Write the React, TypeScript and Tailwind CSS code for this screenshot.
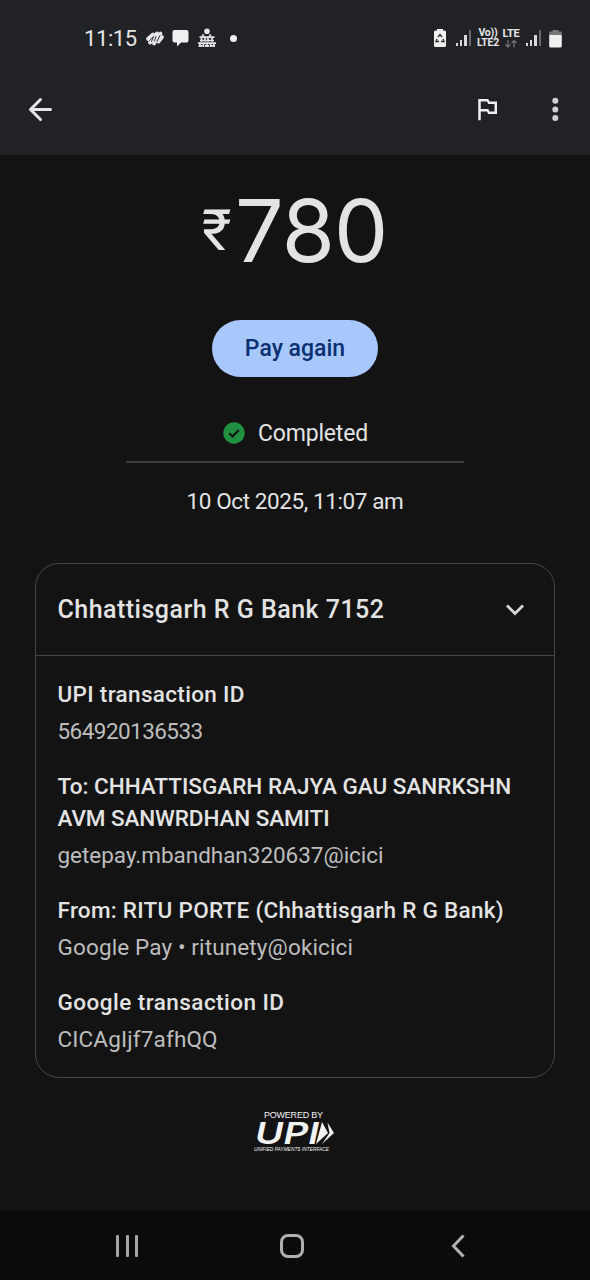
import type { ReactNode } from "react";
import { MdOutlinedFlag } from "react-icons/md";

type Detail = {
  title: ReactNode;
  value: string;
  valueClass: string;
};

const details: Detail[] = [
  {
    title: <span className="tracking-[0.33px]">UPI transaction ID</span>,
    value: "564920136533",
    valueClass: "tracking-[-0.55px]",
  },
  {
    title: (
      <>
        <span className="block">To: CHHATTISGARH RAJYA GAU SANRKSHN</span>
        <span className="block tracking-[-0.1px]">AVM SANWRDHAN SAMITI</span>
      </>
    ),
    value: "getepay.mbandhan320637@icici",
    valueClass: "tracking-[-0.03px]",
  },
  {
    title: <span className="tracking-[0.28px]">From: RITU PORTE (Chhattisgarh R G Bank)</span>,
    value: "Google Pay • ritunety@okicici",
    valueClass: "tracking-[0.13px]",
  },
  {
    title: <span className="tracking-[0.46px]">Google transaction ID</span>,
    value: "CICAgIjf7afhQQ",
    valueClass: "tracking-[0.15px]",
  },
];

function Signal() {
  return (
    <svg width="16" height="18" viewBox="0 0 16 18" fill="#d8d8da">
      <rect x="0" y="14" width="2" height="3" />
      <rect x="4" y="11" width="2" height="6" />
      <rect x="8" y="6" width="3" height="11" />
      <rect x="13" y="1" width="2" height="16" fill="#69696c" />
    </svg>
  );
}

function StatusBar() {
  return (
    <div className="flex h-[76px] items-center pl-[84px] text-[#e6e6e8]">
      <span className="w-[61px] text-[22px] tracking-[-0.4px]">11:15</span>
      <svg width="20" height="18" viewBox="0 0 20 18" fill="none" stroke="#e6e6e8" strokeLinecap="round">
        <path d="M3 10 8 5.500M5 13.500 12 4.500M9 14.500 15.500 4.500M13.500 12.500 17 8" strokeWidth="3.8" />
        <path d="M4.500 11.500 8.500 7.500 6.500 12.500M11 7.500 9.500 12M15 6.500l-3 6" stroke="#212226" strokeWidth="0.9" />
      </svg>
      <svg className="ml-[7px]" width="18" height="18" viewBox="0 0 18 18" fill="#f0f0f0">
        <path d="M2.5 1h12a2 2 0 0 1 2 2v8.500a2 2 0 0 1-2 2H9L5 17.500v-4H2.500a2 2 0 0 1-2-2V3a2 2 0 0 1 2-2z" />
      </svg>
      <svg className="ml-[7px]" width="20" height="20" viewBox="0 0 20 20" fill="none" stroke="#e6e6e8" strokeWidth="1.700">
        <circle cx="10" cy="3.200" r="2.800" fill="#e6e6e8" stroke="none" />
        <path d="M2.500 9.200h15M4.500 9.200v4.500M8 9.200v4.500M11 9.200v4.500M15 9.200v4.500M3 12.500h4M9 12.500h8M5 7.800l2-1M12 7.800l2-1" />
        <path d="M1 15.200h18M3 15v4M6.500 15v4M10 15v4M13.500 15v4M17 15v4M1.500 17.800h4M8 17.800h4M14 17.800h4" />
      </svg>
      <span className="ml-[13px] size-[7px] rounded-full bg-[#f0f0f0]" />

      <svg className="ml-[196px]" width="14" height="20" viewBox="0 0 14 20">
        <path d="M4 1h6v1.500h1.500A1.500 1.500 0 0 1 13 4v13.500A1.500 1.500 0 0 1 11.500 19h-9A1.500 1.500 0 0 1 1 17.500V4a1.500 1.500 0 0 1 1.500-1.500H4z" fill="#f0f0f0" />
        <path d="M5 9 7 6.500 9 9M10 11l1 2.500H8M6 13.500H3L4 11" fill="none" stroke="#2a2b2e" strokeWidth="1.400" />
      </svg>
      <div className="ml-[9px] flex"><Signal /></div>
      <div className="ml-1 w-[24px] text-center text-[10.5px] leading-[10px] font-bold tracking-[-0.2px] whitespace-nowrap">
        <div>Vo))</div>
        <div>LTE2</div>
      </div>
      <div className="ml-[2px] flex w-[18px] flex-col items-center text-[11px] leading-[10px] font-bold tracking-[-0.2px]">
        LTE
        <svg width="12" height="9" viewBox="0 0 12 9" fill="none" stroke="#77777a" strokeWidth="1.200">
          <path d="M3 1v7M0.500 5.500 3 8l2.500-2.500M9 8.500v-7M6.500 4 9 1.500 11.500 4" />
        </svg>
      </div>
      <div className="ml-[6px] flex"><Signal /></div>
      <svg className="ml-[7px]" width="13" height="19" viewBox="0 0 13 19">
        <path d="M3.500 1h6v1.500H12a1 1 0 0 1 .8 1V6H.2V3.500a1 1 0 0 1 .8-1h2.500z" fill="#77777a" />
        <path d="M.2 6h12.600v11a1.500 1.500 0 0 1-1.500 1.500H1.700A1.500 1.500 0 0 1 .2 17z" fill="#f0f0f0" />
      </svg>
    </div>
  );
}

function Toolbar() {
  return (
    <div className="flex h-[79px] items-start pt-[18px] pl-[28px]">
      <svg width="26" height="31" viewBox="0 0 26 31" fill="none" stroke="#e6e6e8" strokeWidth="3" strokeLinecap="round" strokeLinejoin="round">
        <path d="M22.500 15.500H2.500M12.500 5.500l-10 10 10 10" />
      </svg>
      <MdOutlinedFlag className="ml-[418px] size-[30px] text-[#f0f0f0]" />
      <svg className="ml-[47px]" width="12" height="31" viewBox="0 0 12 31" fill="#cfcfd1">
        <circle cx="6.300" cy="6.800" r="3" />
        <circle cx="6.300" cy="15.400" r="3" />
        <circle cx="6.300" cy="24" r="3" />
      </svg>
    </div>
  );
}

function BankCard() {
  return (
    <section className="mx-auto mt-[46px] h-[515px] w-[520px] rounded-[24px] border border-[#444546]">
      <div className="flex h-[92px] items-center justify-between border-b border-[#444546] pr-[29px] pl-[21.5px]">
        <h2 className="text-[25px] font-medium tracking-[0.48px]">Chhattisgarh R G Bank 7152</h2>
        <svg width="20" height="14" viewBox="0 0 20 14" fill="none" stroke="#d5d5d5" strokeWidth="2.800">
          <path d="M2 2.500 10 10.500 18 2.500" />
        </svg>
      </div>
      <div className="flex flex-col gap-[22.5px] px-[21.5px] pt-[21.5px]">
        {details.map((d) => (
          <div key={d.value} className="text-[22.5px] leading-8 whitespace-nowrap">
            <div className="font-medium">{d.title}</div>
            <div className="mt-[5.5px] text-[#bdbdbd]">
              <span className={d.valueClass}>{d.value}</span>
            </div>
          </div>
        ))}
      </div>
    </section>
  );
}

function UpiLogo() {
  return (
    <svg className="mt-[29px]" width="86" height="48" viewBox="0 0 86 48" fill="#f2f2f2">
      <text x="12" y="11" fontSize="9" textLength="59" fontFamily="Liberation Sans, sans-serif">POWERED BY</text>
      <text x="3" y="37" fontSize="29.500" textLength="64" lengthAdjust="spacingAndGlyphs" fontWeight="600" fontStyle="italic" fontFamily="Inter, sans-serif">UPI</text>
      <path d="M70 15 76 26 64 37z" />
      <path d="M75.500 15.500 82 26 70 37 77.500 26z" />
      <text x="2" y="44" fontSize="5" textLength="75" lengthAdjust="spacingAndGlyphs" fontStyle="italic" fontFamily="Liberation Sans, sans-serif">UNIFIED PAYMENTS INTERFACE</text>
    </svg>
  );
}

function NavBar() {
  return (
    <nav className="flex h-[69px] items-center bg-[#0b0b0b] pl-[116px]">
      <div className="flex w-[22px] justify-between">
        <span className="h-[22px] w-[3px] rounded-[1px] bg-[#a5a5a5]" />
        <span className="h-[22px] w-[3px] rounded-[1px] bg-[#a5a5a5]" />
        <span className="h-[22px] w-[3px] rounded-[1px] bg-[#a5a5a5]" />
      </div>
      <span className="ml-[142px] size-6 rounded-[8px] border-3 border-[#b0b0b0]" />
      <svg className="ml-[146px]" width="16" height="24" viewBox="0 0 16 24" fill="none" stroke="#b0b0b0" strokeWidth="3">
        <path d="M13.500 1.500 3.500 12l10 10.500" />
      </svg>
    </nav>
  );
}

export default function App() {
  return (
    <div className="flex h-[1280px] w-[590px] flex-col overflow-hidden bg-[#131313] font-[Roboto,sans-serif] text-[#e3e3e3]">
      <header className="h-[155px] bg-[#212226]">
        <StatusBar />
        <Toolbar />
      </header>
      <main className="flex h-[1056px] flex-col items-center">
        <div className="mt-[26px] flex h-[100px] w-full pl-[202px] font-[Inter,sans-serif] leading-[100px]">
          <span className="w-[33px] text-[57px] font-[Roboto,sans-serif]">₹</span>
          <span className="text-[86px] font-[370] tracking-[-0.8px]">780</span>
        </div>
        <button className="mt-[39px] h-[57px] w-[166px] rounded-full bg-[#a8c7fa] pt-[2px] text-[23px] font-medium text-[#0b2f73]">
          Pay again
        </button>
        <div className="mt-[40px] flex h-8 items-center pl-px">
          <svg className="mr-[13px]" width="22" height="22" viewBox="0 0 22 22">
            <circle cx="11" cy="11" r="10.700" fill="#1f9140" />
            <path d="M6.200 11.200 9.500 14.500 15.800 8" fill="none" stroke="#131313" strokeWidth="2.200" />
          </svg>
          <span className="pt-[2px] text-[23px] tracking-[-0.2px]">Completed</span>
        </div>
        <div className="mt-[12px] h-[2px] w-[338px] bg-[#3c3d3e]" />
        <p className="mt-[22px] h-8 text-[22.5px] leading-8 tracking-[-0.4px]">10 Oct 2025, 11:07 am</p>
        <BankCard />
        <UpiLogo />
      </main>
      <NavBar />
    </div>
  );
}
